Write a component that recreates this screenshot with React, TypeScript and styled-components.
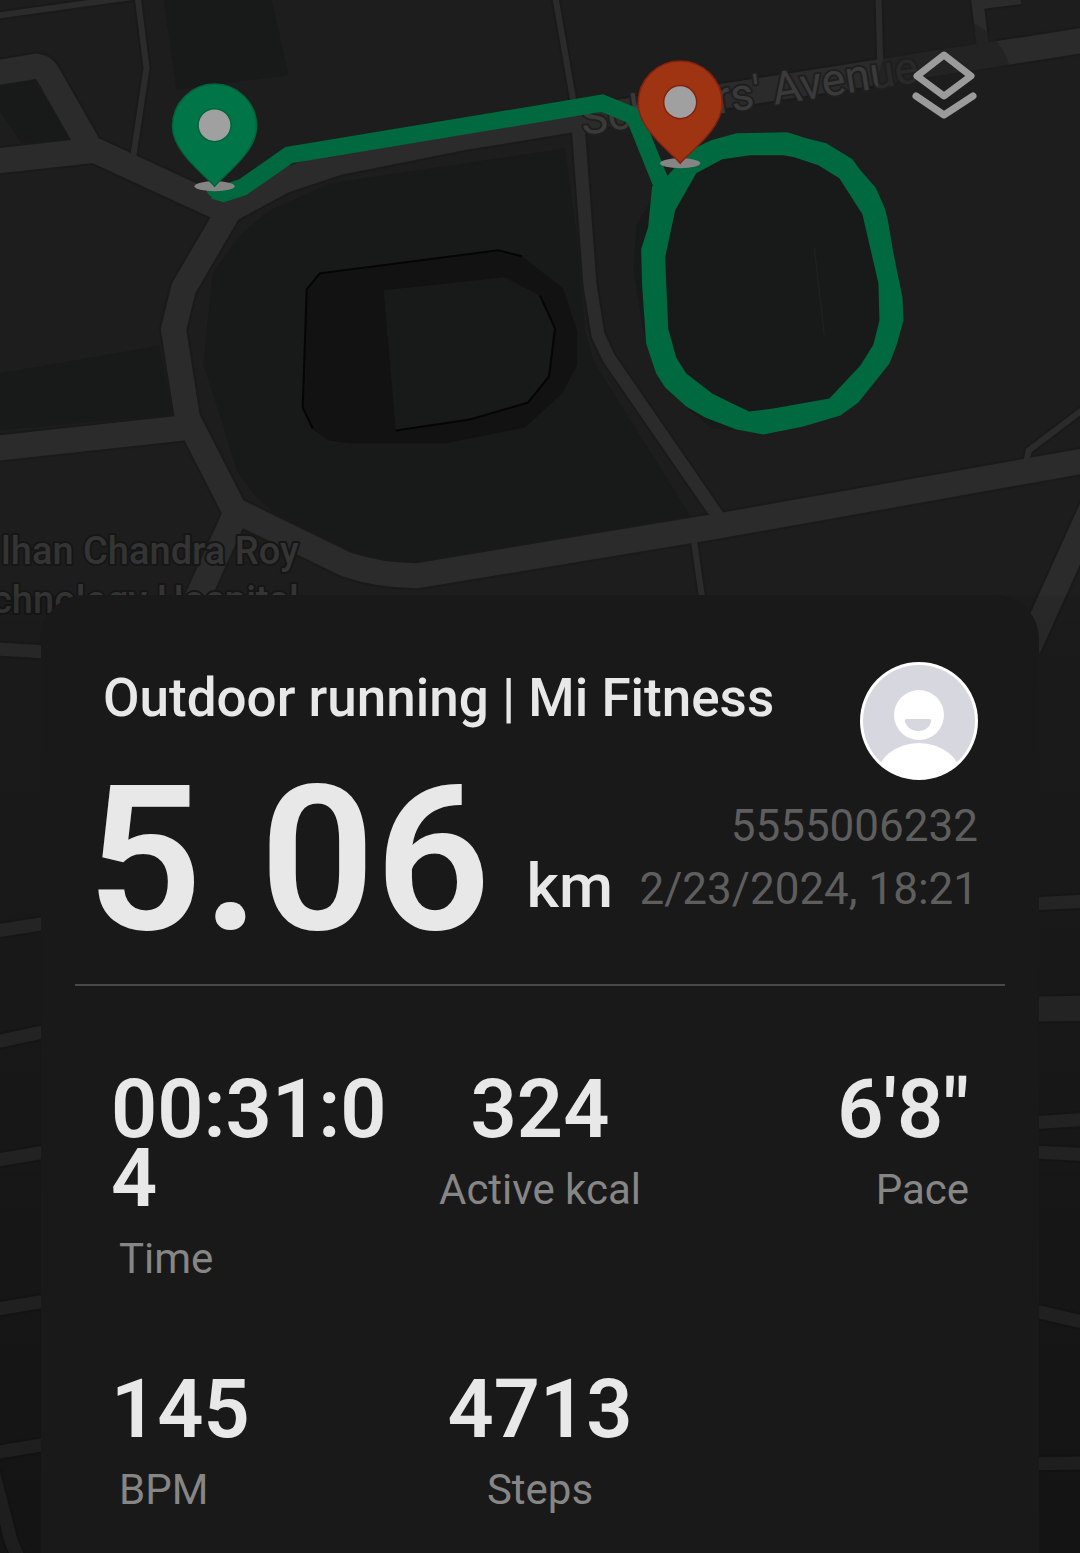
import React from 'react';
import styled, { createGlobalStyle } from 'styled-components';

const GlobalStyle = createGlobalStyle`
  *, *::before, *::after { box-sizing: border-box; }
  body {
    margin: 0;
    background: #191919;
    font-family: Roboto, "Liberation Sans", sans-serif;
  }
`;

const Page = styled.main`
  position: relative;
  display: flex;
  flex-direction: column;
  min-height: 100vh;
  overflow: hidden;
  background: #1d1d1d;
`;

const MapCanvas = styled.svg`
  position: absolute;
  inset: 0;
  width: 100%;
  height: 100%;
`;

const MapControls = styled.div`
  position: relative;
  display: flex;
  justify-content: flex-end;
  align-items: flex-start;
  height: 595px;
  padding: 17px 68px;
`;

const LayersButton = styled.button`
  display: grid;
  place-items: center;
  width: 134px;
  height: 134px;
  padding: 0;
  border: 0;
  border-radius: 50%;
  background: rgba(30, 30, 30, 0.6);
  cursor: pointer;
`;

const Sheet = styled.section`
  position: relative;
  display: flex;
  flex: 1;
  flex-direction: column;
  margin: 0 41px;
  padding: 67px 34px 40px;
  border-radius: 44px 44px 0 0;
  background: #191919;
  color: #e8e8e8;
`;

const Header = styled.header`
  padding: 0 27px 44px 12px;
  border-bottom: 2px solid #484848;
`;

const HeaderRow = styled.div`
  display: flex;
  justify-content: space-between;
  align-items: flex-start;
`;

const Title = styled.h1`
  margin: 0;
  padding: 4px 0 0 16px;
  font-size: 53px;
  line-height: 64px;
  font-weight: 500;
`;

const Distance = styled.p`
  display: flex;
  align-items: flex-end;
  gap: 36px;
  margin: 0;
`;

const DistanceValue = styled.span`
  font-size: 202px;
  line-height: 160px;
  font-weight: 600;
`;

const DistanceUnit = styled.span`
  padding-bottom: 23px;
  font-size: 62px;
  line-height: 62px;
  font-weight: 500;
`;

const Meta = styled.div`
  display: flex;
  flex-direction: column;
  align-items: flex-end;
  padding-top: 15px;
  color: #5e5e5e;
  font-size: 44px;
  line-height: 63px;
  white-space: nowrap;
`;

const Stats = styled.dl`
  display: grid;
  grid-template-columns: repeat(3, minmax(0, 1fr));
  align-items: start;
  row-gap: 91px;
  margin: 0;
  padding: 89px 36px 0;
`;

type Align = 'left' | 'center' | 'right';

const Stat = styled.div<{ $align: Align }>`
  display: flex;
  flex-direction: column-reverse;
  gap: 21px;
  text-align: ${(p) => p.$align};
`;

const StatLabel = styled.dt<{ $inset: boolean }>`
  padding-left: ${(p) => (p.$inset ? 8 : 0)}px;
  color: #868686;
  font-size: 42px;
  line-height: 50px;
`;

const StatValue = styled.dd`
  margin: 0;
  font-size: 81px;
  line-height: 69px;
  font-weight: 600;
  word-break: break-all;
`;

const stats: { label: string; value: string; align: Align }[] = [
  { label: 'Time', value: '00:31:04', align: 'left' },
  { label: 'Active kcal', value: '324', align: 'center' },
  { label: 'Pace', value: '6\'8"', align: 'right' },
  { label: 'BPM', value: '145', align: 'left' },
  { label: 'Steps', value: '4713', align: 'center' },
];

const roads: { d: string; w: number }[] = [
  { w: 6, d: 'M-5 16L140 -4' },
  { w: 6, d: 'M138 -5L147 68L134 155' },
  { w: 6, d: 'M555 -5L574 105' },
  { w: 6, d: 'M878 -5L880 70' },
  { w: 6, d: 'M1026 460L1028 450L1085 407' },
  { w: 6, d: 'M693 535L703 605' },
  { w: 12, d: 'M976 -5L983 52M972 4L1020 -2' },
  { w: 13, d: 'M578 125L590 285L598 335L609 358L722 522' },
  { w: 25, d: 'M-5 73L37 66Q45 67 49 75L92 150' },
  { w: 25, d: 'M-5 161L95 150L232 213' },
  { w: 25, d: 'M232 206L184 288L174 329L188 418L236 512' },
  { w: 25, d: 'M222 214L285 180L340 162L460 138L600 115L1085 40' },
  { w: 25, d: 'M-5 448L188 427' },
  { w: 25, d: 'M230 507L347 564Q380 575 417 575L720 525L1085 460' },
  { w: 25, d: 'M240 504L192 610' },
  { w: 25, d: 'M1097 494L1028 647' },
  { w: 13, d: 'M-5 648L60 652' },
  { w: 13, d: 'M-5 930L60 920' },
  { w: 13, d: 'M-5 1041L60 1027' },
  { w: 13, d: 'M-5 1159L60 1148' },
  { w: 13, d: 'M-5 1308L60 1297' },
  { w: 13, d: 'M-5 1451L60 1440' },
  { w: 13, d: 'M-6 1470L12 1540L22 1562' },
  { w: 13, d: 'M1020 903L1085 900' },
  { w: 25, d: 'M1020 1008L1085 1007' },
  { w: 13, d: 'M1020 1122L1085 1118' },
  { w: 13, d: 'M1020 1150L1085 1153' },
  { w: 13, d: 'M1020 1306L1085 1321' },
  { w: 13, d: 'M1020 1462L1085 1461' },
];

const loop =
  'M652 186L648 227L641 249L642 285L646 343L656 373L665 387L686 406L705 417L736 429L763 434L803 426L840 415L858 402L889 363L896 345L903 320L902 297L893 253L887 218L884 207L875 187L860 170L852 159L826 143L806 138L787 132L736 133L711 140L690 150L667 176Z' +
  'M675 210L696 173L722 159L750 155L783 155L794 157L818 165L839 178L862 214L878 283L879 320L873 344L860 365L829 398L773 408L749 411L734 404L712 393L686 373L676 357L668 328L665 257Z';

function Pin({ x, y, fill, edge }: { x: number; y: number; fill: string; edge: string }) {
  return (
    <g transform={`translate(${x} ${y})`}>
      <ellipse cy="61" rx="20" ry="5" fill="#858585" />
      <path
        d="M0 61C-9 50 -42 27 -42 1A42 42 0 0 1 42 1C42 27 9 50 0 61Z"
        fill={fill}
        stroke={edge}
        strokeWidth="1.5"
      />
      <circle r="16.5" fill="#a0a0a0" stroke={edge} strokeWidth="1.5" />
    </g>
  );
}

function RouteMap() {
  return (
    <MapCanvas viewBox="0 0 1080 1553" preserveAspectRatio="xMidYMin slice" role="img" aria-label="Route map">
      <defs>
        <linearGradient id="fade" x1="0" y1="0" x2="0" y2="1">
          <stop offset="0" stopColor="#000" stopOpacity="0.08" />
          <stop offset="1" stopColor="#000" stopOpacity="0.32" />
        </linearGradient>
      </defs>
      <rect width="1080" height="1553" fill="#1d1d1d" />
      <g fill="#181a19">
        <path d="M164 0H272L289 75L177 90Z" />
        <path d="M0 86L34 80L71 138L22 143L0 110Z" />
        <path d="M0 373L160 345L174 414L0 430Z" />
        <path d="M213 273L240 235L270 210L330 183L565 148L578 245L585 330L593 360L690 515L420 562L385 562L350 551L275 512L255 495L237 470L222 420L204 365L208 320Z" />
        <path d="M651 200L636 225L633 270L645 340L665 385L690 410L712 428L763 432L860 400L892 320L880 210L840 160L780 140L700 150Z" />
      </g>
      <path
        d="M307 289L320 273L498 250L522 256L563 288L577 330V365L562 393L525 427L445 443H350L330 440L312 428L303 407Z"
        fill="#121212"
      />
      <path d="M384 290L505 277L540 295L555 328L549 376L528 402L470 419L396 430Z" fill="#181a19" />
      <g fill="none" stroke="#050505" strokeWidth="2">
        <path d="M313 428L303 407L307 289L320 273L498 250L522 256" />
        <path d="M540 295L555 328L549 376L528 402L470 419L396 430" />
      </g>
      <path d="M814 248L824 335" stroke="#202221" strokeWidth="1" />
      <g fill="none" stroke="#1a1a1a">
        {roads.map((r) => (
          <path key={r.d} d={r.d} strokeWidth={r.w + 4} />
        ))}
      </g>
      <g fill="none" stroke="#2b2b2b">
        {roads.map((r) => (
          <path key={r.d} d={r.d} strokeWidth={r.w} />
        ))}
      </g>
      <g fill="#3a3a3a" stroke="#1f1f1f" strokeWidth="4" paintOrder="stroke" strokeLinejoin="round">
        <text transform="translate(583 135) rotate(-9)" fontSize="45">
          Scholars' Avenue
        </text>
        <g fontSize="38" fontWeight="500" textAnchor="end" fill="#343434" stroke="#161616">
          <text x="299" y="563">lhan Chandra Roy</text>
          <text x="299" y="612">chnology Hospital</text>
        </g>
      </g>
      <path
        d="M214 190L224 193L243 187L289 155L602 103L634 116L661 183"
        fill="none"
        stroke="#00693f"
        strokeWidth="17"
      />
      <circle cx="215" cy="189" r="8" fill="#00693f" />
      <path d={loop} fill="#00693f" fillRule="evenodd" />
      <Pin x={215} y={125} fill="#007648" edge="#00643c" />
      <Pin x={680} y={102} fill="#9f3413" edge="#86200f" />
      <rect y="595" width="1080" height="958" fill="url(#fade)" />
    </MapCanvas>
  );
}

function LayersIcon() {
  return (
    <svg width="66" height="72" viewBox="0 0 66 72" fill="none" stroke="#9b9b9b" strokeWidth="7" strokeLinejoin="round" strokeLinecap="round" aria-hidden="true">
      <path d="M32 7L59 28L32 48L5 28Z" />
      <path d="M4 48L32 67L61 48" />
    </svg>
  );
}

function Avatar() {
  return (
    <svg width="118" height="118" viewBox="0 0 118 118" role="img" aria-label="Profile picture">
      <clipPath id="avatar-clip">
        <circle cx="59" cy="59" r="57" />
      </clipPath>
      <circle cx="59" cy="59" r="59" fill="#fff" />
      <circle cx="59" cy="59" r="56" fill="#d6d7df" />
      <circle cx="59" cy="53" r="25" fill="#fff" />
      <path d="M47 57H69Q72 57 71 60C68 72 49 72 45 60Q44 57 47 57Z" fill="#d6d7df" />
      <ellipse cx="59" cy="117" rx="43" ry="36" fill="#fff" clipPath="url(#avatar-clip)" />
    </svg>
  );
}

export default function App() {
  return (
    <Page>
      <GlobalStyle />
      <RouteMap />
      <MapControls>
        <LayersButton type="button" aria-label="Map layers">
          <LayersIcon />
        </LayersButton>
      </MapControls>
      <Sheet>
        <Header>
          <HeaderRow>
            <Title>Outdoor running | Mi Fitness</Title>
            <Avatar />
          </HeaderRow>
          <HeaderRow>
            <Distance>
              <DistanceValue>5.06</DistanceValue>
              <DistanceUnit>km</DistanceUnit>
            </Distance>
            <Meta>
              <span>5555006232</span>
              <time dateTime="2024-02-23T18:21">2/23/2024, 18:21</time>
            </Meta>
          </HeaderRow>
        </Header>
        <Stats>
          {stats.map((s) => (
            <Stat key={s.label} $align={s.align}>
              <StatLabel $inset={s.align === 'left'}>{s.label}</StatLabel>
              <StatValue>{s.value}</StatValue>
            </Stat>
          ))}
        </Stats>
      </Sheet>
    </Page>
  );
}
